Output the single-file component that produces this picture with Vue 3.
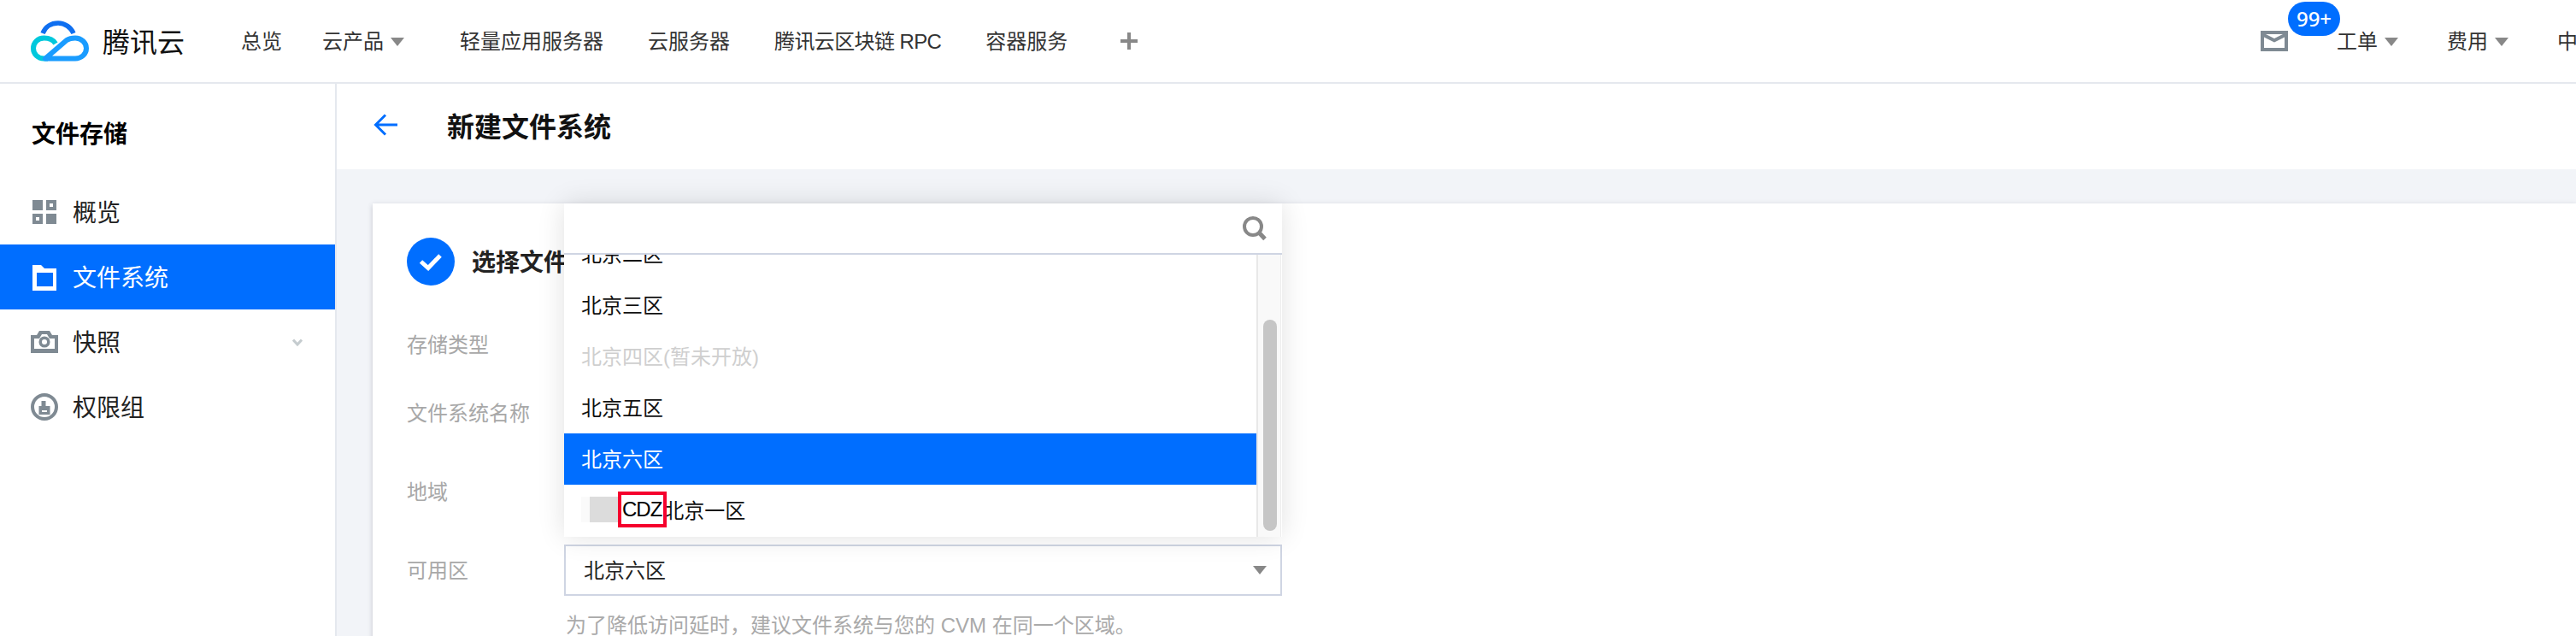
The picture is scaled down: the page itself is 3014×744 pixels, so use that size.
<template>
  <div class="page">
    <header class="topbar">
      <div class="brand">
        <svg class="logo" viewBox="0 0 68 48" fill="none">
          <path d="M14 15C17 7 24 3 32 3C40 3 47 8 50 15" stroke="#0f6ff0" stroke-width="5.500" />
          <path d="M29 27C26 22 21 20.500 15.500 20.500C8 20.500 3 26 3 32.500C3 39.500 8.500 44.500 15.500 44.500L20 44.500" stroke="#00c8dc" stroke-width="6" />
          <path d="M17 44.500L42 23C45 21 48 20.500 52 20.500C59 20.500 65 26 65 32.500C65 39.500 59 44.500 52 44.500Z" stroke="#1a9cff" stroke-width="6" stroke-linejoin="round" />
        </svg>
        <span class="brand-name">腾讯云</span>
      </div>
      <nav class="nav">
        <a class="nav-item">总览</a>
        <a class="nav-item products">云产品<i class="caret"></i></a>
        <div class="pinned">
          <a v-for="item in pinned" :key="item" class="nav-item" :class="{ tight: item.includes('RPC') }">{{ item }}</a>
        </div>
        <svg class="plus" viewBox="0 0 20 20"><path d="M8 0h4v8h8v4h-8v8H8v-8H0V8h8z" fill="#888" /></svg>
      </nav>
      <div class="tools">
        <div class="mail">
          <svg width="32" height="24" viewBox="0 0 32 24">
            <rect width="32" height="24" fill="#7f8a93" />
            <path d="M4 7.500L16 13.500L28 7.500V20H4Z" fill="#fff" />
            <path d="M6 4H26L16 9Z" fill="#fff" />
          </svg>
          <span class="badge">99+</span>
        </div>
        <a class="nav-item">工单<i class="caret"></i></a>
        <a class="nav-item">费用<i class="caret"></i></a>
        <a class="nav-item">中</a>
      </div>
    </header>

    <div class="body">
      <aside class="sidebar">
        <h2 class="side-title">文件存储</h2>
        <a class="side-item">
          <svg class="side-icon" viewBox="0 0 32 32">
            <path fill="#7f8a93" d="M2 2h12v12H2zM18 2h12v12H18zM2 18h12v12H2zM18 18h12v12H18z" />
            <rect x="22" y="6" width="4" height="4" fill="#fff" />
            <rect x="6" y="22" width="4" height="4" fill="#fff" />
          </svg>
          <span>概览</span>
        </a>
        <a class="side-item active">
          <svg class="side-icon" viewBox="0 0 32 32">
            <path fill="#fff" fill-rule="evenodd" d="M2 2h10l4 4h14v26H2zM7 11v16h19V11z" />
          </svg>
          <span>文件系统</span>
        </a>
        <a class="side-item">
          <svg class="side-icon" viewBox="0 0 32 26">
            <path fill="#7f8a93" fill-rule="evenodd" d="M0 5h7l3-5h12l3 5h7v21H0zM4 9v12h24V9h-6l-3-5h-6l-3 5z" />
            <circle cx="16" cy="13" r="4.800" fill="none" stroke="#7f8a93" stroke-width="3.500" />
          </svg>
          <span>快照</span>
          <svg class="chevron" viewBox="0 0 12 9" fill="none"><path d="M1 1.500L6 7L11 1.500" stroke="#c5cccf" stroke-width="3" /></svg>
        </a>
        <a class="side-item">
          <svg class="side-icon" viewBox="0 0 32 32">
            <circle cx="16" cy="16" r="14" fill="none" stroke="#7f8a93" stroke-width="4" />
            <path fill="#7f8a93" fill-rule="evenodd" d="M12.500 9h5v6h5v10H9.500V15h3zM13 20v2h6v-2z" />
          </svg>
          <span>权限组</span>
        </a>
      </aside>

      <main class="main">
        <div class="subhead">
          <svg class="back" viewBox="0 0 28 26" fill="none">
            <path d="M14 1.500L2.500 13L14 24.500M3 13H28" stroke="#006eff" stroke-width="3" />
          </svg>
          <h1 class="page-title">新建文件系统</h1>
        </div>

        <section class="card">
          <div class="step">
            <span class="step-dot">
              <svg width="56" height="56" viewBox="0 0 56 56" fill="none"><path d="M16.500 28L25 35.500L39 21" stroke="#fff" stroke-width="5" /></svg>
            </span>
            <span class="step-name">选择文件系统类型</span>
          </div>

          <div class="form">
            <div class="field"><label class="field-label">存储类型</label></div>
            <div class="field"><label class="field-label">文件系统名称</label></div>
            <div class="field wide"><label class="field-label">地域</label></div>
            <div class="field wide">
              <label class="field-label">可用区</label>
              <div class="select">
                <span class="select-value">北京六区</span>
                <i class="caret dark"></i>
              </div>
            </div>
          </div>
          <p class="help">为了降低访问延时，建议文件系统与您的 CVM 在同一个区域。</p>

          <div class="dropdown">
            <div class="search">
              <input class="search-input" type="text" />
              <svg class="search-icon" viewBox="0 0 28 29" fill="none">
                <circle cx="12" cy="12" r="10" stroke="#888" stroke-width="4" />
                <path d="M19 19L26 26.500" stroke="#888" stroke-width="5" />
              </svg>
            </div>
            <div class="drop-body">
              <ul ref="listEl" class="options">
                <li
                  v-for="opt in options"
                  :key="opt.label"
                  class="option"
                  :class="{ disabled: opt.disabled, selected: opt.selected }"
                >{{ opt.label }}</li>
                <li class="option">
                  <span class="mask"></span>
                  <span class="cdz">CDZ</span>
                  <span>北京一区</span>
                </li>
              </ul>
              <div class="track"><div class="thumb"></div></div>
            </div>
          </div>
        </section>
      </main>
    </div>
  </div>
</template>

<script setup>
import { ref, onMounted } from 'vue'

const pinned = ['轻量应用服务器', '云服务器', '腾讯云区块链 RPC', '容器服务']

const options = [
  { label: '北京一区' },
  { label: '北京二区' },
  { label: '北京三区' },
  { label: '北京四区(暂未开放)', disabled: true },
  { label: '北京五区' },
  { label: '北京六区', selected: true }
]

const listEl = ref(null)

onMounted(() => {
  // list is scrolled down to the selected zone
  listEl.value.scrollTop = 91
})
</script>

<style scoped>
.page {
  width: 3014px;
  height: 744px;
  overflow: hidden;
  display: flex;
  flex-direction: column;
  background: #fff;
  font-family: "Liberation Sans", "Noto Sans CJK SC", sans-serif;
  font-size: 24px;
  color: #222;
}

.topbar {
  flex: none;
  height: 96px;
  display: flex;
  align-items: center;
  padding-left: 36px;
  border-bottom: 2px solid #e5e8ee;
  box-sizing: content-box;
}

.brand {
  display: flex;
  align-items: center;
  margin-right: 66px;
}

.logo {
  width: 68px;
  height: 48px;
}

.brand-name {
  margin-left: 16px;
  padding-bottom: 2px;
  font-size: 32px;
  color: #111;
}

.nav {
  display: flex;
  align-items: center;
}

.nav-item {
  display: flex;
  align-items: center;
  padding-bottom: 3px;
  color: #333;
  white-space: nowrap;
}

.nav-item.tight {
  letter-spacing: -0.6px;
}

.products {
  margin-left: 47px;
}

.caret {
  display: block;
  width: 0;
  height: 0;
  margin: 4px 0 0 8px;
  border-left: 8px solid transparent;
  border-right: 8px solid transparent;
  border-top: 10px solid #888;
}

.pinned {
  display: flex;
  gap: 52px;
  margin-left: 65px;
}

.plus {
  width: 20px;
  height: 20px;
  margin-left: 62px;
}

.tools {
  display: flex;
  align-items: center;
  gap: 57px;
  margin-left: auto;
  margin-right: -2px;
}

.mail {
  position: relative;
  display: flex;
}

.badge {
  position: absolute;
  left: 32px;
  top: -34px;
  width: 61px;
  height: 40px;
  border-radius: 20px;
  background: #006eff;
  color: #fff;
  font-size: 24px;
  line-height: 40px;
  text-align: center;
  font-family: "Noto Sans", sans-serif;
  font-weight: 500;
}

.body {
  flex: 1;
  display: flex;
  min-height: 0;
}

.sidebar {
  flex: none;
  width: 392px;
  border-right: 2px solid #e5e8ee;
  box-sizing: content-box;
}

.side-title {
  margin: 40px 0 32px 37px;
  font-size: 28px;
  line-height: 40px;
  font-weight: 700;
  color: #000;
}

.side-item {
  display: flex;
  align-items: center;
  height: 76px;
  box-sizing: border-box;
  padding: 0 38px 3px 36px;
  font-size: 28px;
  color: #222;
}

.side-item.active {
  background: #006eff;
  color: #fff;
}

.side-icon {
  width: 32px;
  height: 32px;
  margin: 3px 17px 0 0;
  flex: none;
}

.chevron {
  width: 12px;
  height: 9px;
  margin: 3px 0 0 auto;
}

.main {
  flex: 1;
  min-width: 0;
  background: #f2f4f8;
}

.subhead {
  height: 100px;
  box-sizing: border-box;
  padding: 0 0 4px 43px;
  display: flex;
  align-items: center;
  background: #fff;
}

.back {
  width: 28px;
  height: 26px;
  margin-right: 58px;
}

.page-title {
  margin: 0;
  font-size: 32px;
  font-weight: 700;
  color: #111;
}

.card {
  position: relative;
  margin: 40px 0 0 42px;
  height: 600px;
  padding: 40px 0 0 40px;
  box-sizing: border-box;
  background: #fff;
  box-shadow: 0 2px 6px rgba(54, 58, 80, 0.25);
}

.step {
  display: flex;
  align-items: center;
  height: 56px;
}

.step-dot {
  width: 56px;
  height: 56px;
  border-radius: 50%;
  background: #006eff;
  margin-right: 20px;
}

.step-name {
  padding-bottom: 3px;
  font-size: 28px;
  font-weight: 700;
  color: #222;
}

.form {
  margin-top: 39px;
}

.field {
  display: flex;
  align-items: center;
  height: 60px;
  margin-bottom: 20px;
}

.field.wide {
  margin-top: 32px;
  margin-bottom: 0;
}

.field-label {
  width: 184px;
  flex: none;
  padding-bottom: 3px;
  color: #a8a8a8;
}

.select {
  width: 840px;
  height: 60px;
  box-sizing: border-box;
  display: flex;
  align-items: center;
  justify-content: space-between;
  padding: 0 16px 0 21px;
  border: 2px solid #cfd5e3;
  color: #222;
  background: #fff;
}

.select-value {
  padding-bottom: 3px;
}

.caret.dark {
  margin: 0;
}

.help {
  margin: 18px 0 0 186px;
  line-height: 34px;
  color: #aaa;
  white-space: nowrap;
}

.dropdown {
  position: absolute;
  left: 224px;
  top: 0;
  width: 840px;
  height: 390px;
  display: flex;
  flex-direction: column;
  background: #fff;
  box-shadow: 0 0 30px rgba(0, 0, 0, 0.12);
}

.search {
  flex: none;
  height: 60px;
  box-sizing: border-box;
  display: flex;
  align-items: center;
  padding-right: 18px;
  border-bottom: 2px solid #cfd5e3;
}

.search-input {
  flex: 1;
  min-width: 0;
  border: none;
  outline: none;
  background: transparent;
}

.search-icon {
  width: 28px;
  height: 29px;
}

.drop-body {
  flex: 1;
  min-height: 0;
  display: flex;
}

.options {
  flex: 1;
  min-width: 0;
  margin: 0;
  padding: 0 0 8px;
  list-style: none;
  overflow: hidden;
}

.option {
  display: flex;
  align-items: center;
  height: 60px;
  box-sizing: border-box;
  padding: 0 0 3px 20px;
  color: #111;
}

.option.disabled {
  color: #cfcfcf;
}

.option.selected {
  background: #006eff;
  color: #fff;
}

.mask {
  width: 37px;
  height: 30px;
  margin-right: 1px;
  border-left: 10px solid #fafafa;
  background: #dcdcdc;
}

.cdz {
  position: relative;
  margin-right: 2px;
  letter-spacing: -1px;
  color: #000;
}

.cdz::after {
  content: "";
  position: absolute;
  left: -5px;
  right: -6px;
  top: -7px;
  bottom: -7px;
  border: 4px solid #f5002d;
}

.track {
  flex: none;
  width: 29px;
  margin-right: 1px;
  padding: 76px 0 0 6px;
  box-sizing: border-box;
  background: #f9f9f9;
  border-left: 2px solid #e8e8e8;
  border-right: 1px solid #eee;
}

.thumb {
  width: 16px;
  height: 247px;
  border-radius: 8px;
  background: #c6c6c6;
}
</style>
